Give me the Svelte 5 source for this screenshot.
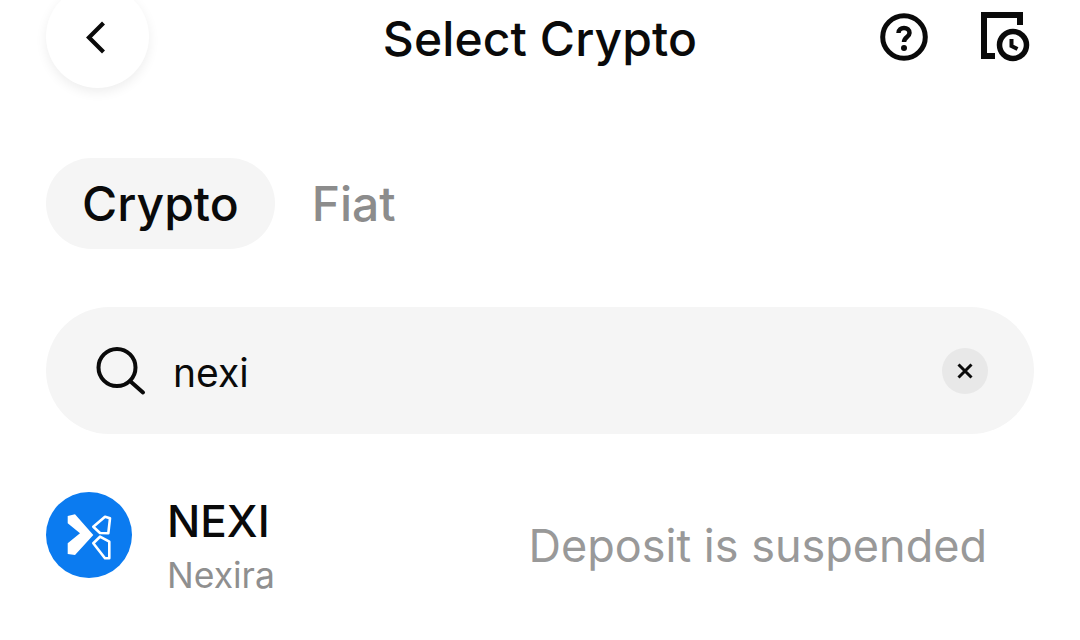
<script>
	let query = 'nexi';
	const tabs = [
		{ label: 'Crypto', active: true },
		{ label: 'Fiat', active: false }
	];
</script>

<div class="page">
	<header class="top">
		<button class="back" aria-label="Back">
			<svg width="26" height="36" viewBox="0 0 26 36" fill="none">
				<path d="M18.5 4 4 18.500 18.500 33" stroke="#0a0a0a" stroke-width="4.200" />
			</svg>
		</button>
		<h1>Select Crypto</h1>
		<div class="actions">
			<svg width="50" height="50" viewBox="0 0 50 50" fill="none">
				<circle cx="25" cy="25" r="21.300" stroke="#0a0a0a" stroke-width="5" />
				<path d="M19.500 21c0-3.500 2.500-5 5.500-5s5.500 1.800 5.500 5c0 4-5.500 4-5.500 9" stroke="#0a0a0a" stroke-width="4.500" />
				<circle cx="25" cy="36" r="3" fill="#0a0a0a" />
			</svg>
			<svg width="52" height="52" viewBox="0 0 52 52" fill="none">
				<path d="M15 45H4V4h36v10" stroke="#0a0a0a" stroke-width="6" />
				<circle cx="33" cy="34" r="13.500" stroke="#0a0a0a" stroke-width="5.500" />
				<path d="M31.500 28v7l6 3" stroke="#0a0a0a" stroke-width="4" />
			</svg>
		</div>
	</header>

	<nav class="tabs">
		{#each tabs as tab}
			<button class="tab" class:active={tab.active}>{tab.label}</button>
		{/each}
	</nav>

	<div class="search">
		<svg width="50" height="50" viewBox="0 0 50 50" fill="none">
			<circle cx="21" cy="21.500" r="18.500" stroke="#0a0a0a" stroke-width="4" />
			<path d="M34 35l13 11.500" stroke="#0a0a0a" stroke-width="4" stroke-linecap="round" />
		</svg>
		<span class="query">{query}</span>
		<button class="clear" aria-label="Clear">
			<svg width="18" height="18" viewBox="0 0 18 18" fill="none">
				<path d="M2.500 2.500l13 13M15.500 2.500l-13 13" stroke="#0a0a0a" stroke-width="3" />
			</svg>
		</button>
	</div>

	<div class="row">
		<svg class="coin" width="86" height="86" viewBox="0 0 86 86">
			<circle cx="43" cy="43" r="43" fill="#0b7bf0" />
			<path d="M21.700 24 29 22.300 47.300 43 29 63 21.700 62V51.300L34 41.300 21.700 31.300z" fill="#fff" />
			<path d="M47.300 34.700 59 24.700l5 1.600-1.700 15-8.300-.300z" fill="none" stroke="#fff" stroke-width="2.600" stroke-linejoin="round" />
			<path d="M47.300 51.300 54 44.700l9.300 5v16.600H59z" fill="none" stroke="#fff" stroke-width="2.600" stroke-linejoin="round" />
		</svg>
		<div class="names">
			<span class="symbol">NEXI</span>
			<span class="name">Nexira</span>
		</div>
		<span class="status">Deposit is suspended</span>
	</div>
</div>

<style>
	:global(body) {
		margin: 0;
		background: #fff;
	}

	.page {
		width: 1080px;
		height: 640px;
		box-sizing: border-box;
		padding: 0 46px;
		overflow: hidden;
		font-family: Inter, 'Liberation Sans', sans-serif;
		color: #0a0a0a;
	}

	button {
		border: 0;
		background: none;
		padding: 0;
		font: inherit;
		color: inherit;
	}

	.top {
		display: grid;
		grid-template-columns: 1fr auto 1fr;
		grid-template-rows: 76px;
		align-items: center;
	}

	.back {
		display: flex;
		align-items: center;
		justify-content: center;
		align-self: start;
		width: 103px;
		height: 103px;
		margin-top: -15px;
		border-radius: 50%;
		background: #fff;
		box-shadow: 0 4px 12px rgba(0, 0, 0, 0.07);
	}

	h1 {
		margin: 0;
		font-size: 48px;
		font-weight: 470;
		letter-spacing: 0.1px;
	}

	.actions {
		display: flex;
		justify-content: flex-end;
		align-items: center;
		gap: 51px;
		margin-top: -2px;
		padding-right: 2px;
	}

	.tabs {
		display: flex;
		gap: 37px;
		align-items: center;
		margin-top: 82px;
	}

	.tab {
		height: 91px;
		font-size: 48px;
		font-weight: 450;
		color: #8c8c8c;
	}

	.tab.active {
		padding: 0 36px;
		border-radius: 46px;
		background: #f5f5f5;
		color: #0a0a0a;
	}

	.search {
		display: flex;
		align-items: center;
		height: 127px;
		margin-top: 58px;
		padding: 0 46px 0 50px;
		border-radius: 64px;
		background: #f5f5f5;
	}

	.query {
		flex: 1;
		margin-left: 27px;
		padding-top: 4px;
		font-size: 39px;
	}

	.clear {
		display: flex;
		align-items: center;
		justify-content: center;
		width: 46px;
		height: 46px;
		border-radius: 50%;
		background: #e8e8e8;
	}

	.row {
		display: flex;
		align-items: center;
		margin-top: 58px;
	}

	.coin {
		align-self: flex-start;
	}

	.names {
		display: flex;
		flex-direction: column;
		gap: 6px;
		flex: 1;
		margin: 3px 0 0 35px;
	}

	.symbol {
		font-size: 44px;
		font-weight: 480;
		line-height: 52px;
	}

	.name {
		font-size: 35.500px;
		line-height: 46px;
		color: #8f8f8f;
	}

	.status {
		margin-right: 47px;
		font-size: 45px;
		color: #999;
	}
</style>
